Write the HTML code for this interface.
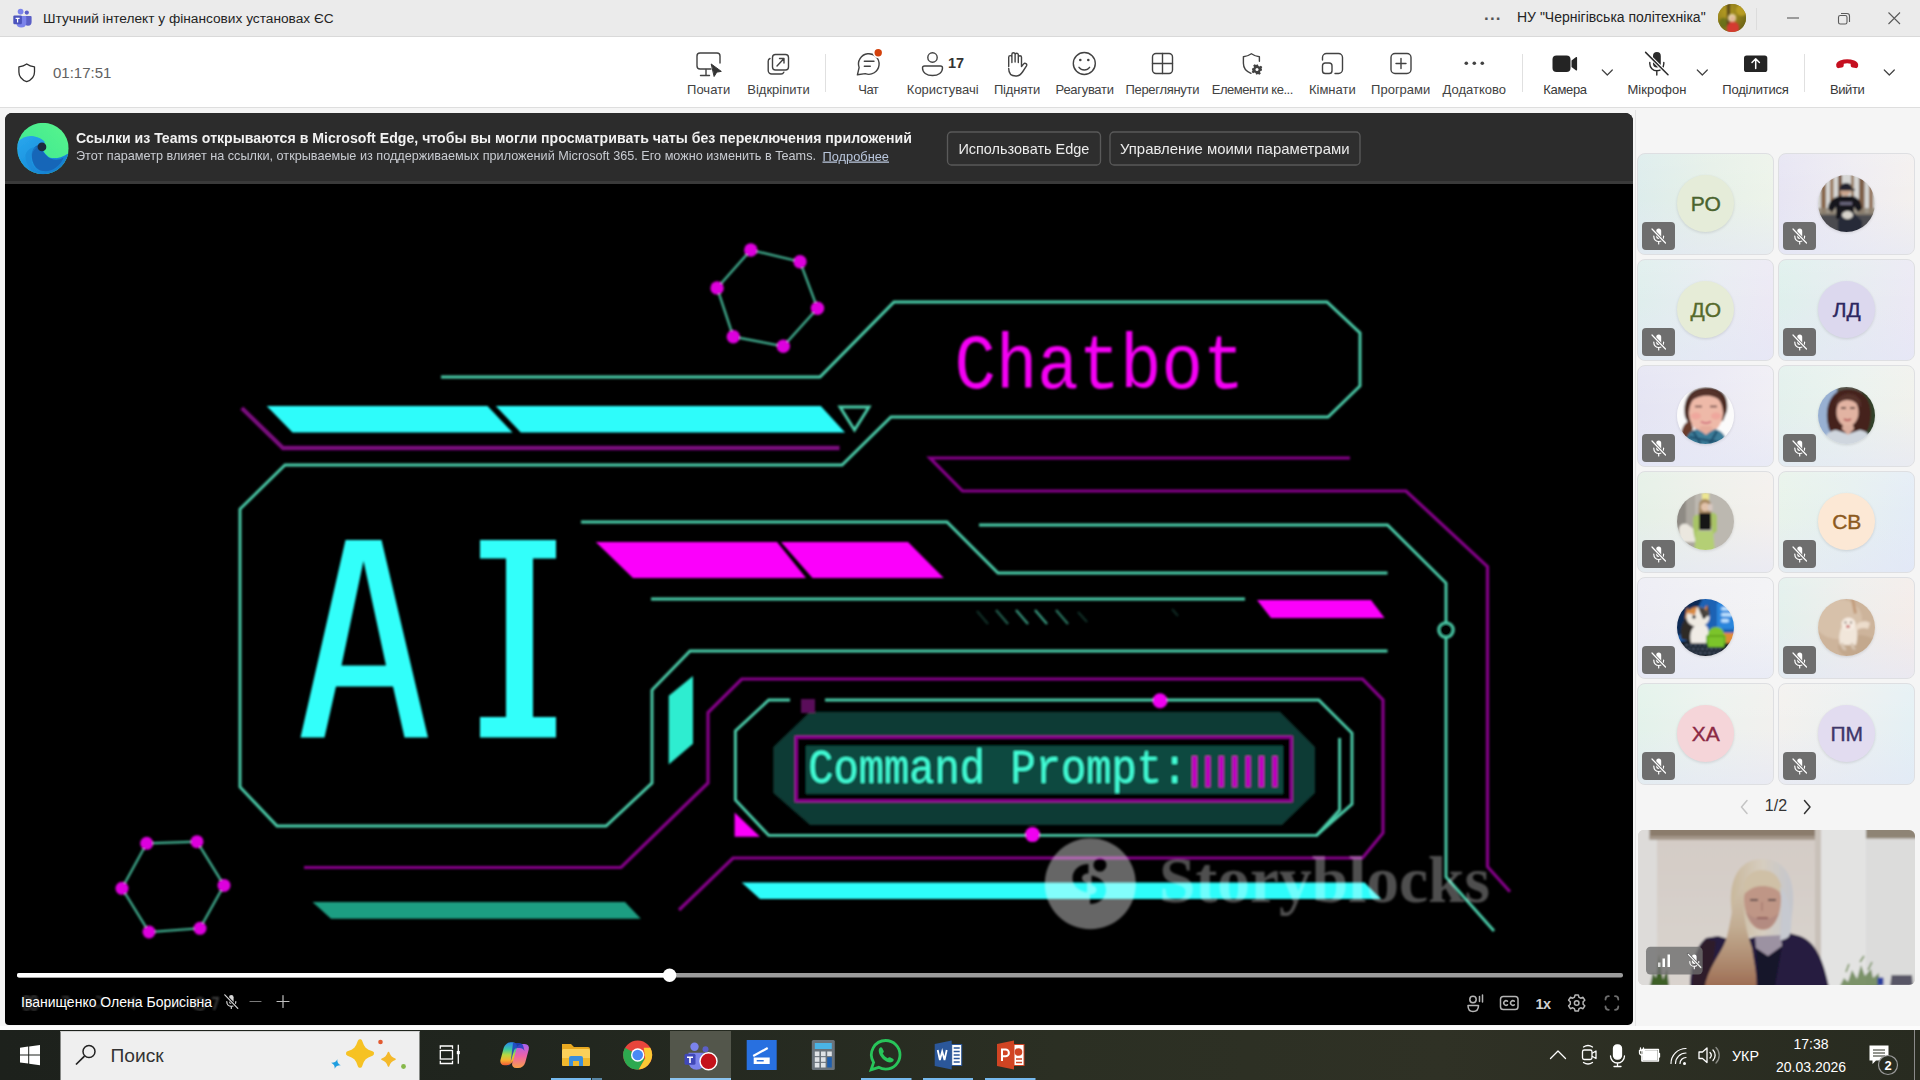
<!DOCTYPE html>
<html lang="uk">
<head>
<meta charset="utf-8">
<title>Teams</title>
<style>
*{box-sizing:border-box;margin:0;padding:0}
html,body{width:1920px;height:1080px;overflow:hidden;background:#f5f5f5;font-family:"Liberation Sans",sans-serif;}
.abs{position:absolute}
#titlebar{position:absolute;left:0;top:0;width:1920px;height:37px;background:#ebebeb;border-bottom:1px solid #d9d9d9}
#toolbar{position:absolute;left:0;top:37px;width:1920px;height:71px;background:#fff;border-bottom:1px solid #dedede}
#main{position:absolute;left:0;top:108px;width:1920px;height:922px;background:#f5f5f5}
#stage{position:absolute;left:5px;top:113px;width:1628px;height:912px;background:#000;border-radius:7px 8px 5px 4px;overflow:hidden}
#taskbar{position:absolute;left:0;top:1030px;width:1920px;height:50px;background:#20251f}
.t{position:absolute;white-space:nowrap;line-height:1}
.lbl{position:absolute;white-space:nowrap;line-height:1;font-size:13px;color:#424242;top:83px;transform:translateX(-50%)}
.sep{position:absolute;width:1px;background:#e0e0e0;top:54px;height:38px}
.tile::before{content:"";position:absolute;inset:0;background:linear-gradient(180deg,rgba(255,255,255,.12) 0%,rgba(255,255,255,0) 45%,rgba(226,230,246,.55) 100%)}
.tile{position:absolute;width:137px;height:102px;border-radius:8px;border:1px solid #dedfe2;overflow:hidden}
.av{position:absolute;left:39.500px;top:21.400px;width:57px;height:57px;border-radius:50%;overflow:hidden;text-align:center;font-size:21px;line-height:58px;-webkit-text-stroke:.4px currentColor;box-shadow:0 1px 3px rgba(0,0,0,.12)}
.mb{position:absolute;left:4px;top:68.500px;width:33px;height:28px;border-radius:4px;background:#6e6e6e}
svg{position:absolute;overflow:visible}
</style>
</head>
<body>
<!-- TITLE BAR -->
<div id="titlebar">
<svg style="left:13px;top:8px" width="19" height="20" viewBox="0 0 19 20">
 <circle cx="13.8" cy="4.6" r="2.1" fill="#5b5fc7"/>
 <circle cx="7.6" cy="3.6" r="2.9" fill="#7b83eb"/>
 <path d="M11.5 8h6.2a.9.9 0 0 1 .9.9v5.2a3.6 3.6 0 0 1-3.6 3.6 3.6 3.6 0 0 1-3.5-3z" fill="#5b5fc7"/>
 <path d="M3.2 8h9.2a.9.9 0 0 1 .9.9v6a5 5 0 0 1-5 4.6 5 5 0 0 1-5-4.6v-6a.9.9 0 0 1 .9-.9z" fill="#7b83eb"/>
 <rect x="0.3" y="7.6" width="8.6" height="8.6" rx="1.2" fill="#4b53bc"/>
 <path d="M2.6 9.8h4v1.1H5.2v3.6H4V10.9H2.6z" fill="#fff"/>
</svg>
<div class="t" style="left:43px;top:12px;font-size:13.7px;color:#242424">Штучний інтелект у фінансових установах ЄС</div>
<div class="t" style="left:1484px;top:6px;font-size:17px;letter-spacing:1.2px;color:#555;font-weight:bold">...</div>
<div class="t" style="left:1517px;top:10px;font-size:14px;color:#242424">НУ "Чернігівська політехніка"</div>
<div class="abs" style="left:1718px;top:4px;width:28px;height:28px;border-radius:50%;overflow:hidden;background:#8f7c1c"><div class="abs" style="inset:-2px;filter:blur(.8px);background:radial-gradient(circle at 30% 30%,#b39a22 0,#93801c 40%,#6b6416 75%,#4f5214 100%)">
  <div class="abs" style="left:20px;top:2px;width:12px;height:12px;border-radius:50%;background:#c4a626;opacity:.8"></div>
  <div class="abs" style="left:3px;top:16px;width:9px;height:10px;border-radius:50%;background:#5a6a1a;opacity:.7"></div>
  <div class="abs" style="left:10.500px;top:0;width:3.500px;height:32px;background:#4e3c18;opacity:.85"></div>
  <div class="abs" style="left:12px;top:11.500px;width:8px;height:8.500px;border-radius:50%;background:#e6d2a4"></div>
  <div class="abs" style="left:13.500px;top:14px;width:5.500px;height:5.500px;border-radius:50%;background:#e2b898"></div>
  <div class="abs" style="left:10.500px;top:19.500px;width:12px;height:14px;border-radius:5px 5px 0 0;background:#d43a30"></div>
</div></div>
<div class="abs" style="left:1756px;top:8px;width:1px;height:22px;background:#dcdcdc"></div>
<svg style="left:1784px;top:10px" width="130" height="18" viewBox="1784 10 130 18" fill="none" stroke="#5a5a5a" stroke-width="1.1">
 <path d="M1787 18h12"/>
 <rect x="1838.5" y="15.5" width="8.5" height="8.5" rx="1.8"/>
 <path d="M1841 13.5h6a2.5 2.5 0 0 1 2.5 2.5v6"/>
 <path d="M1888.5 12.5l11.5 11.5M1900 12.5l-11.5 11.5"/>
</svg>
</div>
<!-- TOOLBAR -->
<div id="toolbar"></div>
<svg style="left:0;top:0" width="1920" height="108" viewBox="0 0 1920 108" fill="none" stroke="#424242" stroke-width="1.4" stroke-linecap="round" stroke-linejoin="round">
 <!-- shield -->
 <path d="M26.700 64c-2 1.500-4.700 2.500-7.800 2.800v5.200c0 4.600 2.900 7.900 7.800 9.700 4.900-1.800 7.800-5.100 7.800-9.700v-5.200c-3.100-.3-5.800-1.300-7.800-2.800z" stroke="#2e2e2e" stroke-width="1.300"/>
 <!-- Pochaty: monitor + cursor -->
 <path d="M711 69h-11a3 3 0 0 1-3-3V56a3 3 0 0 1 3-3h17a3 3 0 0 1 3 3v7"/>
 <path d="M706 69.500v5.500M700.500 75.500h9"/>
 <path d="M711.500 64.200l9.800 7.200-4.500.7-2.500 4.100z" fill="#333" stroke="#333" stroke-width="1"/>
 <!-- Vidkripyty -->
 <rect x="772.500" y="54.500" width="16" height="15.500" rx="3"/>
 <path d="M770 58.500a3 3 0 0 0-1.800 2.800v9.200a3.500 3.500 0 0 0 3.500 3.500h9.300a3 3 0 0 0 2.800-1.800"/>
 <path d="M777 66l7-7.500M779.500 58.500h4.500v4.500"/>
 <!-- Chat -->
 <path d="M859.120 67.520A10.300 10.300 0 1 1 865.280 73.680L857.400 74.800Z"/>
 <path d="M864.300 61.300h9.700M864.300 66.300h6"/>
 <circle cx="878.200" cy="52.800" r="5.400" fill="#fff" stroke="none"/>
 <circle cx="878.200" cy="52.800" r="3.700" fill="#d3410c" stroke="none"/>
 <!-- Users -->
 <circle cx="932.500" cy="57.500" r="4.700"/>
 <path d="M924.500 66h16a2 2 0 0 1 2 2c0 4.500-4 7.500-10 7.500s-10-3-10-7.500a2 2 0 0 1 2-2z"/>
<!-- Hand -->
 <path transform="translate(-1.3,0)" d="M1010 66.500v-9.300a1.600 1.600 0 0 1 3.200 0v5.300M1013.200 62.500v-8.200a1.600 1.600 0 0 1 3.200 0v7.700M1016.400 62v-7.200a1.600 1.600 0 0 1 3.200 0v7.700M1019.600 62.500v-5.200a1.600 1.600 0 0 1 3.200 0v9.200l2.200-2.600a1.700 1.700 0 0 1 2.800 1.900l-4 6.200c-1.500 2.400-3.500 4-6.800 4-4.500 0-7-2.800-7-7.500"/>
 <!-- Smile -->
 <circle cx="1084.300" cy="63.500" r="11"/>
 <circle cx="1080.300" cy="60" r="1.300" fill="#424242" stroke="none"/>
 <circle cx="1088.300" cy="60" r="1.300" fill="#424242" stroke="none"/>
 <path d="M1079 67.300c1.300 1.800 3.100 2.700 5.300 2.700s4-.9 5.300-2.700"/>
 <!-- View grid -->
 <rect x="1152.500" y="53.500" width="20" height="20" rx="3.500"/>
 <path d="M1162.500 53.500v20M1152.500 63.500h20"/>
 <!-- Shield gear -->
 <path d="M1251 73.300c-4.600-1.700-7.600-4.900-7.600-10v-6.600c3.200-.3 5.700-1.300 8-2.900 2.300 1.600 4.800 2.600 8 2.900v4.500"/>
 <g transform="translate(1257,69.500)" fill="#424242" stroke="none"><path d="M-1-5h2l.4 1.500 1.100.5 1.400-.8 1.400 1.400-.8 1.400.5 1.100L5-1v2l-1.500.4-.5 1.100.8 1.400-1.400 1.400-1.400-.8-1.100.5L1 5h-2l-.4-1.500-1.100-.5-1.400.8-1.400-1.400.8-1.400-.5-1.100L-5 1v-2l1.500-.4.500-1.100-.8-1.400 1.400-1.400 1.400.8 1.100-.5z"/><circle r="1.500" fill="#fff"/></g>
 <!-- Rooms -->
 <path d="M1322.500 60v-2.500a4 4 0 0 1 4-4h12a4 4 0 0 1 4 4v12a4 4 0 0 1-4 4h-3.500"/>
 <rect x="1322.500" y="63" width="9.500" height="10.500" rx="2.800"/>
 <!-- Apps -->
 <rect x="1391" y="53.500" width="20" height="20" rx="4"/>
 <path d="M1401 58.500v10M1396 63.500h10"/>
 <!-- More -->
 <g fill="#424242" stroke="none"><circle cx="1466.300" cy="63.300" r="1.800"/><circle cx="1474.300" cy="63.300" r="1.800"/><circle cx="1482.300" cy="63.300" r="1.800"/></g>
 <!-- Camera -->
 <g fill="#242424" stroke="none"><rect x="1552.500" y="55.500" width="18" height="16.500" rx="4"/><path d="M1571.500 60.500l4.300-3.300a.8.800 0 0 1 1.300.6v11.900a.8.800 0 0 1-1.300.6l-4.300-3.300z"/></g>
 <!-- Mic off -->
 <rect x="1653" y="52" width="7.800" height="15.500" rx="3.900" fill="#2b2b2b" stroke="none"/>
 <path d="M1649.800 62.500v1.300a7 7 0 0 0 14 0v-1.300M1656.800 71v4" stroke="#2b2b2b"/>
 <path d="M1645.300 52l23 23" stroke="#fff" stroke-width="3.600"/>
 <path d="M1645.600 52.400l22.400 22.400" stroke="#2b2b2b" stroke-width="1.500"/>
 <!-- Share -->
 <rect x="1744" y="55.500" width="23.300" height="16.500" rx="2.600" fill="#242424" stroke="none"/>
 <path d="M1755.700 68.500v-9.500M1752 62.500l3.700-3.700 3.700 3.700" stroke="#fff" stroke-width="1.500"/>
 <!-- Leave -->
 <path d="M1836.300 66.300c-.6-2.800 1-4.600 3.800-5.700 4.600-1.800 9.600-1.800 14.200 0 2.800 1.100 4.400 2.900 3.800 5.700-.3 1.300-1.200 2-2.500 1.800l-3-.5c-1.100-.2-1.800-1-1.900-2.100l-.1-1.700c-2.200-.7-4.600-.7-6.800 0l-.1 1.700c-.1 1.100-.8 1.900-1.900 2.100l-3 .5c-1.300.2-2.200-.5-2.500-1.800z" fill="#c50f1f" stroke="none"/>
 <!-- chevrons -->
 <path d="M1602.300 70l5 5 5-5M1697.300 70l5 5 5-5M1884.300 70l5 5 5-5" stroke-width="1.200"/>
</svg>
<div class="t" style="left:53px;top:65px;font-size:15px;color:#616161">01:17:51</div>
<div class="t" style="left:948px;top:56px;font-size:14.500px;font-weight:bold;color:#333">17</div>
<div class="lbl" style="left:708.700px">Почати</div>
<div class="lbl" style="left:778.500px">Відкріпити</div>
<div class="lbl" style="left:868.300px;letter-spacing:-.5px">Чат</div>
<div class="lbl" style="left:942.700px">Користувачі</div>
<div class="lbl" style="left:1017px;letter-spacing:-.15px">Підняти</div>
<div class="lbl" style="left:1084.600px;letter-spacing:-.3px">Реагувати</div>
<div class="lbl" style="left:1162.300px;letter-spacing:-.3px">Переглянути</div>
<div class="lbl" style="left:1252.300px;letter-spacing:-.45px">Елементи ке...</div>
<div class="lbl" style="left:1332.300px">Кімнати</div>
<div class="lbl" style="left:1400.700px">Програми</div>
<div class="lbl" style="left:1474.300px">Додатково</div>
<div class="lbl" style="left:1565px;color:#383838;letter-spacing:-.35px">Камера</div>
<div class="lbl" style="left:1657px;color:#383838">Мікрофон</div>
<div class="lbl" style="left:1755.500px;color:#383838;letter-spacing:-.2px">Поділитися</div>
<div class="lbl" style="left:1847.200px;color:#383838;letter-spacing:-.4px">Вийти</div>
<div class="sep" style="left:825px"></div>
<div class="sep" style="left:1522px"></div>
<div class="sep" style="left:1804px"></div>
<!-- MAIN -->
<div id="main"></div>
<div class="abs" style="left:1635px;top:110px;width:1px;height:920px;background:#e3e3e3"></div>
<!-- STAGE -->
<div id="stage">
<svg style="left:0;top:0" width="1628" height="912" viewBox="5 113 1628 912">
<defs>
 <filter id="b0" x="-2%" y="-20%" width="104%" height="140%"><feGaussianBlur stdDeviation="0.45"/></filter>
 <filter id="b1" x="-5%" y="-5%" width="110%" height="110%"><feGaussianBlur stdDeviation="0.85"/></filter>
 <filter id="b2" x="-5%" y="-5%" width="110%" height="110%"><feGaussianBlur stdDeviation="1.1"/></filter>
</defs>
<!-- notification bar -->
<rect x="5" y="113" width="1628" height="71" fill="#2c2c2c"/>
<rect x="5" y="181" width="1628" height="3" fill="#3a3a3a"/>
<g id="gfx" filter="url(#b1)">
<!-- teal outlines -->
<g fill="none" stroke="#4ccfab" stroke-width="2.900" stroke-linejoin="miter">
 <path d="M1387.500 651H690L652 690V783L606 826H277L240 787V509L285 465H842L891 417H1328L1360 386V333L1327 302H894L820 377H441"/>
 <path d="M581 522H947L998 573H1387.500"/>
 <path d="M979 525H1387.500L1446 583V877L1494 931"/>
 <path d="M651 599H1245"/>
 <path d="M825 700H1318.750L1352 733V804L1316.700 835.400H768.750L735.400 800V731L768.750 700H790"/>
 <path d="M1339.600 738V810L1316 836"/>
 <path d="M840 407H869L854.500 430Z"/>
</g>
<circle cx="1446" cy="630" r="7.500" fill="#000" stroke="#4ccfab" stroke-width="2.600"/>
<!-- purple lines -->
<g fill="none" stroke="#86068a" stroke-width="3.200">
 <path d="M241.700 408L283 448H839.600" stroke-width="4.300" stroke="#7a087e"/>
 <path d="M1350 458H930L962.500 491H1406L1487.500 566.700V866.700L1510 891.700"/>
 <path d="M304 867.500H621L708 783V712.500L741.700 679H1362.500L1383 700V833L1362.500 858H733L679 910"/>
</g>
<!-- cyan bars -->
<g fill="#2ffcfa">
 <path d="M266.700 406H487.500L512.500 432.500H292.500Z"/>
 <path d="M495.800 406H820.800L845 432.500H520.800Z"/>
 <path d="M741.700 882.500H1364.600L1381 899H760Z"/>
</g>
<path d="M312.500 902H625L640.800 918.750H331Z" fill="#1e9e82"/>
<path d="M668.750 695.800L693 676V743.750L668.750 764.600Z" fill="#2fedd0"/>
<!-- magenta bars -->
<g fill="#fb00fb">
 <path d="M595.800 542H777L806 578H633Z"/>
 <path d="M781 542H908L943.750 578H812.500Z"/>
 <path d="M1257 600H1371L1384.600 618H1271Z"/>
 <path d="M734.600 812.500V836.700H760Z"/>
</g>
<!-- hash marks -->
<g stroke="#3a9c82" stroke-width="2.300" fill="none">
 <path d="M977 611l11 13" opacity=".3"/><path d="M996 610l12 14" opacity=".6"/><path d="M1016 610l12 14" opacity=".95"/><path d="M1035 610l12 14"/><path d="M1056 610l12 14" opacity=".75"/><path d="M1078 612l9 10" opacity=".3"/><path d="M1172 609l6 7" opacity=".25"/>
</g>
<!-- AI -->
<g fill="#30fffa">
 <path fill-rule="evenodd" d="M300.500 737.500L345.500 540H381.500L428 737.500H404.500L393 686.500H336L324.500 737.500ZM363.500 561L341.500 665.500H386Z"/>
 <path d="M480 540H556V558.500H533V717H556V737.500H480V717H506V558.500H480Z"/>
</g>
<!-- hexagons -->
<g fill="none" stroke="#45b898" stroke-width="2.200">
 <path d="M750.800 250L800 261.700L817.500 308.300L783.300 346.300L733.300 336.700L717.100 287.900Z"/>
 <path d="M146.700 843.300L197 841.700L224 885.400L200 928.300L149 932L122 888.300Z"/>
</g>
<g fill="#de00de">
 <circle cx="750.800" cy="250" r="6.700"/><circle cx="800" cy="261.700" r="6.700"/><circle cx="817.500" cy="308.300" r="6.700"/><circle cx="783.300" cy="346.300" r="6.700"/><circle cx="733.300" cy="336.700" r="6.700"/><circle cx="717.100" cy="287.900" r="6.700"/>
 <circle cx="146.700" cy="843.300" r="6.500"/><circle cx="197" cy="841.700" r="6.500"/><circle cx="224" cy="885.400" r="6.500"/><circle cx="200" cy="928.300" r="6.500"/><circle cx="149" cy="932" r="6.500"/><circle cx="122" cy="888.300" r="6.500"/>
 <circle cx="1160" cy="700.800" r="7.500" fill="#f000f0"/><circle cx="1032.500" cy="834.600" r="7.500" fill="#f000f0"/>
</g>
<!-- command prompt -->
<path d="M773.300 747L810 711.700H1280L1315 747V793L1282 825H810L773.300 793Z" fill="#0e3b34"/>
<rect x="796" y="737" width="495.500" height="64" fill="#000" stroke="#9c069e" stroke-width="2.600"/>
<rect x="806" y="745.800" width="477" height="48" fill="#0f4a40"/>
<rect x="801" y="699" width="14" height="14" fill="#5a0a5a"/>
<g fill="#c000c0">
 <rect x="1192" y="756" width="5" height="31"/><rect x="1205.400" y="756" width="5" height="31"/><rect x="1218.800" y="756" width="5" height="31"/><rect x="1232.200" y="756" width="5" height="31"/><rect x="1245.600" y="756" width="5" height="31"/><rect x="1259" y="756" width="5" height="31"/><rect x="1272.400" y="756" width="5" height="31"/>
</g>
<g font-family="Liberation Mono, monospace">
 <text transform="translate(954.500,388) scale(1,1.130)" font-size="69" fill="#f400f4">Chatbot</text>
 <text transform="translate(808.300,782.500) scale(1,1.150)" font-size="42.100" fill="#42ffd8">Command Prompt:</text>
</g>
</g>
<!-- watermark -->
<g filter="url(#b1)">
 <path fill-rule="evenodd" fill="#fff" opacity=".40" d="M1044.800 883.800a45.500 45.500 0 1 0 91 0a45.500 45.500 0 1 0-91 0zM1100 858.500a6.500 6.500 0 1 1-.1 0zM1088.500 864c-9 0-16 6-16 14 0 9 7 12.500 14.500 14.500v-9.500c-3.500-1-5-2.500-5-5s2.500-4.500 6.500-4.500zM1091.500 875.500v9.500c3.500 1 5 2.500 5 5s-2.500 4.500-6.500 4.500v9.500c9 0 16-6 16-14 0-9-7-12.500-14.500-14.500z"/>
 <text x="1159" y="902" font-family="Liberation Serif, serif" font-weight="bold" font-size="65" textLength="331" lengthAdjust="spacingAndGlyphs" fill="#fff" opacity=".31">Storyblocks</text>
</g>
<!-- progress -->
<rect x="17" y="973" width="1606" height="4.500" rx="2" fill="#9b9b9b"/>
<rect x="17" y="973" width="653" height="4.500" rx="2" fill="#fff"/>
<circle cx="669.600" cy="975.200" r="6.700" fill="#fff"/>
<!-- ghost controls -->
<g fill="none" stroke="#3a3a3a" stroke-width="1.800" filter="url(#b1)"><rect x="24" y="996" width="5" height="14" rx="2.500"/><rect x="31.500" y="996" width="5" height="14" rx="2.500"/><path d="M62 997h6v8M96 997a5 5 0 1 1-3 3M128 1003l6-5v10zM165 1007h10M180 1000v8M190 1003l6 6" opacity=".9"/><path d="M200 998a5 6 0 0 1 0 12a5 6 0 0 1 0-12zM212 998l6 0-4 12" stroke="#444"/></g>
<!-- mic off / minus / plus -->
<g fill="none" stroke="#d8d8d8" stroke-width="1.200" stroke-linecap="round">
 <rect x="229" y="995" width="4.600" height="9" rx="2.300" fill="#d8d8d8" stroke="none"/>
 <path d="M226.800 1001.500v.3a4.500 4.500 0 0 0 9 0v-.3M231.300 1006.300v2.200"/>
 <path d="M224.500 994.500l13.500 14" stroke="#000" stroke-width="2.800"/>
 <path d="M224.800 994.800l13 13.500"/>
 <path d="M250 1001.500h11" stroke="#7a7a7a"/>
 <path d="M277 1001.500h12M283 995.500v12" stroke="#c0c0c0"/>
</g>
<!-- right controls -->
<g fill="none" stroke="#b4b4b4" stroke-width="1.500" stroke-linecap="round" stroke-linejoin="round">
 <circle cx="1473" cy="999.500" r="3.200"/><path d="M1468 1005.500h10.500c0 4-2.500 6-5.500 6s-5-2-5-6zM1479.500 996.500v5M1482.500 995v7"/>
 <rect x="1500.500" y="996.500" width="17.500" height="13" rx="2.800"/><path d="M1507.500 1001.200a2.300 2.300 0 1 0 0 3.600M1514.300 1001.200a2.300 2.300 0 1 0 0 3.600"/>
 <g transform="translate(1576.700,1003)"><path d="M-1.600-8h3.200l.7 2.300 1.700.9 2.300-.9 1.800 2.900-1.700 1.600v2.400l1.700 1.600-1.800 2.900-2.300-.9-1.700.9-.7 2.300h-3.200l-.7-2.300-1.700-.9-2.300.9-1.800-2.900 1.700-1.600v-2.400l-1.700-1.600 1.800-2.900 2.300.9 1.700-.9z"/><circle r="2.300"/></g>
 <path d="M1605.500 999.500c0-2 1.200-3.300 3.300-3.300M1615 996.200c2 0 3.300 1.200 3.300 3.300M1618.300 1006.500c0 2-1.200 3.300-3.300 3.300M1608.800 1009.800c-2 0-3.300-1.200-3.300-3.300" stroke="#6c6c6c" stroke-width="1.800"/>
</g>
<text x="1535.500" y="1009" font-family="Liberation Sans, sans-serif" font-weight="bold" font-size="14.500" fill="#d0d0d0" letter-spacing="-.5">1x</text>
<text x="21" y="1007" font-family="Liberation Sans, sans-serif" font-size="14" fill="#fff">Іванищенко Олена Борисівна</text>
<!-- notification content -->
<g filter="url(#b0)">
 <defs>
  <linearGradient id="eg1" x1="0" y1="0" x2="1" y2="1"><stop offset="0" stop-color="#2aa8ee"/><stop offset=".5" stop-color="#1b94e0"/><stop offset="1" stop-color="#1670c4"/></linearGradient>
  <linearGradient id="eg2" x1="0" y1="1" x2="1" y2="0"><stop offset="0" stop-color="#35d6a0"/><stop offset=".5" stop-color="#48ec90"/><stop offset="1" stop-color="#58f58c"/></linearGradient>
 </defs>
 <g transform="translate(17.300,122.800) scale(.514)">
  <clipPath id="ec"><circle cx="50" cy="50" r="50"/></clipPath>
  <g clip-path="url(#ec)">
   <rect x="0" y="0" width="100" height="100" fill="url(#eg2)"/>
   <path d="M-2 40C8 28 20 24 32 26c10 2 18 6 22 12l-8 6c4 10 8 18 18 24 10 2 22 0 34-8l6 10-10 30H-2z" fill="url(#eg1)"/>
   <path d="M28 62c0-10 6-18 16-20 4 12 10 22 22 28 8 3 16 2 24-2-6 16-22 28-40 26C36 92 28 78 28 62z" fill="#1466b8"/>
   <path d="M16 66c0 16 12 30 30 34-14-8-20-20-18-34 1-8 4-14 10-18-10-2-22 6-22 18z" fill="#1b86d6" opacity=".55"/>
   <circle cx="48" cy="47" r="8.500" fill="#1c2a3c"/>
  </g>
 </g>
 <text x="76" y="142.500" font-family="Liberation Sans, sans-serif" font-weight="bold" font-size="14.100" fill="#f2f2f2" textLength="836" lengthAdjust="spacingAndGlyphs">Ссылки из Teams открываются в Microsoft Edge, чтобы вы могли просматривать чаты без переключения приложений</text>
 <text x="76" y="159.500" font-family="Liberation Sans, sans-serif" font-size="12.600" fill="#c9ccd2" textLength="740" lengthAdjust="spacingAndGlyphs">Этот параметр влияет на ссылки, открываемые из поддерживаемых приложений Microsoft 365. Его можно изменить в Teams.</text>
 <text x="822.500" y="160.500" font-family="Liberation Sans, sans-serif" font-size="12.600" fill="#b9c6dc" textLength="66.500" lengthAdjust="spacingAndGlyphs" text-decoration="underline">Подробнее</text>
 <rect x="947.500" y="132" width="153" height="33" rx="4" fill="#2f2f2f" stroke="#5a5a5a" stroke-width="1.300"/>
 <rect x="1110" y="132" width="250" height="33" rx="4" fill="#2f2f2f" stroke="#5a5a5a" stroke-width="1.300"/>
 <text x="958.400" y="153.500" font-family="Liberation Sans, sans-serif" font-size="14.500" fill="#ececec" textLength="131" lengthAdjust="spacingAndGlyphs">Использовать Edge</text>
 <text x="1120" y="153.500" font-family="Liberation Sans, sans-serif" font-size="14.500" fill="#ececec" textLength="229.500" lengthAdjust="spacingAndGlyphs">Управление моими параметрами</text>
</g>
</svg>
</div>
<!-- RIGHT PANEL -->
<div id="right"><svg width="0" height="0" style="left:0;top:0"><defs><filter id="pb" x="-10%" y="-10%" width="120%" height="120%"><feGaussianBlur stdDeviation="0.800"/></filter></defs></svg>
<div class="tile" style="left:1636.8px;top:152.7px;background:linear-gradient(100deg,#dcecec 0%,#e6f0e8 50%,#eef4ea 100%)">
<div class="av" style="background:#e5ecd9;color:#4b6430">РО</div>
<div class="mb"><svg style="left:0;top:0" width="33" height="28" viewBox="0 0 33 28" fill="none" stroke="#fff" stroke-width="1.200" stroke-linecap="round"><rect x="14.200" y="6.500" width="5" height="10.500" rx="2.500" fill="#fff" stroke="none"/><path d="M11.800 14v.6a4.900 4.900 0 0 0 9.800 0v-.6M16.700 19.600v2.400"/><path d="M9.700 6.700l14 14.600" stroke="#6e6e6e" stroke-width="3"/><path d="M10 7l13.500 14"/></svg></div></div>
<div class="tile" style="left:1777.8px;top:152.7px;background:linear-gradient(100deg,#e6e4f3 0%,#eeecf2 50%,#f5f1ee 100%)">
<div class="av"><svg style="left:0;top:0" width="57" height="57" viewBox="0 0 57 57"><g filter="url(#pb)"><rect x="-3" y="-3" width="63" height="63" fill="#d6d6d4"/>
<g fill="#8a6a50"><rect x="3" y="-3" width="5" height="50"/><rect x="12" y="-3" width="3.500" height="46" fill="#9a7a5e"/><rect x="20" y="-3" width="4" height="30" fill="#7a5c46"/><rect x="33" y="-3" width="3" height="30" fill="#9a8068"/><rect x="41" y="-3" width="5.500" height="48" fill="#7e604a"/><rect x="51" y="-3" width="4" height="46" fill="#94755a"/></g>
<rect x="-3" y="38" width="63" height="22" fill="#4c4c50"/><rect x="-3" y="33" width="63" height="7" fill="#8e8474" opacity=".8"/>
<path d="M10 34c0-8 6-12 12-13h12c6 1 10 6 10 13l-4 3-4-5v12H18V32l-4 5z" fill="#16161e"/>
<circle cx="27.500" cy="15.500" r="5.300" fill="#caa48c"/><path d="M21.500 14.500c0-4 3-6.500 6.500-6.500s6 2 6 5.500l3 .5v1.500h-15.500z" fill="#20242e"/>
<path d="M20 46l4-8h12l8 8v14H20z" fill="#262a38"/><ellipse cx="29.500" cy="40" rx="5.500" ry="4" fill="#d8d4cc"/>
<rect x="22" y="27" width="12" height="3" fill="#8a84a0" opacity=".7"/></g></svg></div>
<div class="mb"><svg style="left:0;top:0" width="33" height="28" viewBox="0 0 33 28" fill="none" stroke="#fff" stroke-width="1.200" stroke-linecap="round"><rect x="14.200" y="6.500" width="5" height="10.500" rx="2.500" fill="#fff" stroke="none"/><path d="M11.800 14v.6a4.900 4.900 0 0 0 9.800 0v-.6M16.700 19.600v2.400"/><path d="M9.700 6.700l14 14.600" stroke="#6e6e6e" stroke-width="3"/><path d="M10 7l13.500 14"/></svg></div></div>
<div class="tile" style="left:1636.8px;top:258.7px;background:linear-gradient(100deg,#deeeec 0%,#e8ecf2 55%,#ede8f5 100%)">
<div class="av" style="background:#e6ecd7;color:#566a2c">ДО</div>
<div class="mb"><svg style="left:0;top:0" width="33" height="28" viewBox="0 0 33 28" fill="none" stroke="#fff" stroke-width="1.200" stroke-linecap="round"><rect x="14.200" y="6.500" width="5" height="10.500" rx="2.500" fill="#fff" stroke="none"/><path d="M11.800 14v.6a4.900 4.900 0 0 0 9.800 0v-.6M16.700 19.600v2.400"/><path d="M9.700 6.700l14 14.600" stroke="#6e6e6e" stroke-width="3"/><path d="M10 7l13.500 14"/></svg></div></div>
<div class="tile" style="left:1777.8px;top:258.7px;background:linear-gradient(100deg,#def0ec 0%,#e6ecf0 50%,#ece8f5 100%)">
<div class="av" style="background:#dcd8ee;color:#2c2760">ЛД</div>
<div class="mb"><svg style="left:0;top:0" width="33" height="28" viewBox="0 0 33 28" fill="none" stroke="#fff" stroke-width="1.200" stroke-linecap="round"><rect x="14.200" y="6.500" width="5" height="10.500" rx="2.500" fill="#fff" stroke="none"/><path d="M11.800 14v.6a4.900 4.900 0 0 0 9.800 0v-.6M16.700 19.600v2.400"/><path d="M9.700 6.700l14 14.600" stroke="#6e6e6e" stroke-width="3"/><path d="M10 7l13.500 14"/></svg></div></div>
<div class="tile" style="left:1636.8px;top:364.7px;background:linear-gradient(100deg,#e4e4f3 0%,#eae9f4 50%,#f1eff5 100%)">
<div class="av"><svg style="left:0;top:0" width="57" height="57" viewBox="0 0 57 57"><g filter="url(#pb)"><rect x="-3" y="-3" width="63" height="63" fill="#fbfbfb"/>
<path d="M8 30c-3-16 4-30 22-30 14 0 22 8 20 24l-4 10-34 4z" fill="#4c2a22"/>
<path d="M4 50c0-8 3-14 8-16l4 6-2 14z" fill="#6a3a2a"/>
<ellipse cx="29" cy="26" rx="17" ry="20.500" fill="#eeb9a8"/>
<path d="M12 16c2-10 10-15 20-14 8 1 13 6 14 14-6-6-12-8-20-7-6 1-10 3-14 7z" fill="#55302a"/>
<ellipse cx="19" cy="29" rx="5" ry="3.500" fill="#f0a098" opacity=".7"/><ellipse cx="39" cy="29" rx="5" ry="3.500" fill="#f0a098" opacity=".7"/>
<path d="M18 19.500h7M33 19.500h7" stroke="#5a3a34" stroke-width="1.600"/><path d="M24 34.500c3 2 7 2 10 0" stroke="#d06a7a" stroke-width="1.800" fill="none"/>
<path d="M8 60c0-10 4-16 12-18l9 5 9-5c8 2 12 8 12 18z" fill="#3a7c98"/><path d="M12 50l34 6M16 44l8 14M40 44l-8 14" stroke="#1e4a68" stroke-width="2"/><path d="M22 42l7 6 7-6-2-3h-10z" fill="#e6ac9c"/></g></svg></div>
<div class="mb"><svg style="left:0;top:0" width="33" height="28" viewBox="0 0 33 28" fill="none" stroke="#fff" stroke-width="1.200" stroke-linecap="round"><rect x="14.200" y="6.500" width="5" height="10.500" rx="2.500" fill="#fff" stroke="none"/><path d="M11.800 14v.6a4.900 4.900 0 0 0 9.800 0v-.6M16.700 19.600v2.400"/><path d="M9.700 6.700l14 14.600" stroke="#6e6e6e" stroke-width="3"/><path d="M10 7l13.500 14"/></svg></div></div>
<div class="tile" style="left:1777.8px;top:364.7px;background:linear-gradient(100deg,#e2f0ec 0%,#eaf2ee 50%,#f2f1ec 100%)">
<div class="av"><svg style="left:0;top:0" width="57" height="57" viewBox="0 0 57 57"><g filter="url(#pb)"><rect x="-3" y="-3" width="63" height="63" fill="#5a5a50"/><rect x="-3" y="-3" width="22" height="63" fill="#98b0d2"/><rect x="44" y="-3" width="16" height="63" fill="#33432c"/>
<path d="M10 38c-4-20 4-36 20-36 16 0 26 12 22 34-1 8-6 12-10 12H18c-4 0-7-4-8-10z" fill="#45241f"/>
<ellipse cx="29.500" cy="25" rx="11" ry="14.500" fill="#e2b3a2"/>
<path d="M17 20c2-10 8-14 16-13 7 1 11 6 10 14-4-5-8-8-14-8-5 0-8 3-12 7z" fill="#55302a"/>
<path d="M23 21h5M32 21h5" stroke="#3a2420" stroke-width="1.400"/><path d="M26 32c2 1.500 5 1.500 7 0" stroke="#b85a5a" stroke-width="1.700" fill="none"/>
<path d="M4 60c0-10 6-16 14-17l12 4 12-4c8 1 12 8 12 17z" fill="#cfd6de"/><path d="M24 42l6 6 6-6-1-4h-10z" fill="#dcae9e"/></g></svg></div>
<div class="mb"><svg style="left:0;top:0" width="33" height="28" viewBox="0 0 33 28" fill="none" stroke="#fff" stroke-width="1.200" stroke-linecap="round"><rect x="14.200" y="6.500" width="5" height="10.500" rx="2.500" fill="#fff" stroke="none"/><path d="M11.800 14v.6a4.900 4.900 0 0 0 9.800 0v-.6M16.700 19.600v2.400"/><path d="M9.700 6.700l14 14.600" stroke="#6e6e6e" stroke-width="3"/><path d="M10 7l13.500 14"/></svg></div></div>
<div class="tile" style="left:1636.8px;top:470.7px;background:linear-gradient(100deg,#e4f0e6 0%,#eef0ea 50%,#f5f0ee 100%)">
<div class="av"><svg style="left:0;top:0" width="57" height="57" viewBox="0 0 57 57"><g filter="url(#pb)"><rect x="-3" y="-3" width="63" height="63" fill="#aaa69e"/><rect x="18" y="-3" width="42" height="63" fill="#bcb8b0"/><rect x="-3" y="-3" width="12" height="63" fill="#8e8a84"/>
<rect x="25" y="0" width="7" height="7" fill="#ece690"/>
<path d="M2 36c0-4 4-6 8-5l8 6v12H4c-2-4-2-9-2-13z" fill="#ebe7df"/>
<path d="M22 12c0-4 3-6 6-6s6 2 6 7l1 20h-14z" fill="#a88a62"/>
<circle cx="28" cy="14" r="4.200" fill="#e2c2aa"/><rect x="31" y="11" width="4.500" height="7" rx="1" fill="#d8c8c0"/>
<rect x="22" y="20" width="12" height="17" rx="2" fill="#121218"/>
<path d="M16 26c0-3 3-5 6-4v20l-4 4c-2-6-2-14-2-20zM34 20c3-1 6 1 6 4v14l-5 4z" fill="#a8c466"/>
<path d="M19 38h17l2 22H17z" fill="#b4cf74"/></g></svg></div>
<div class="mb"><svg style="left:0;top:0" width="33" height="28" viewBox="0 0 33 28" fill="none" stroke="#fff" stroke-width="1.200" stroke-linecap="round"><rect x="14.200" y="6.500" width="5" height="10.500" rx="2.500" fill="#fff" stroke="none"/><path d="M11.800 14v.6a4.900 4.900 0 0 0 9.800 0v-.6M16.700 19.600v2.400"/><path d="M9.700 6.700l14 14.600" stroke="#6e6e6e" stroke-width="3"/><path d="M10 7l13.500 14"/></svg></div></div>
<div class="tile" style="left:1777.8px;top:470.7px;background:linear-gradient(100deg,#e8f3ea 0%,#e6f0f0 50%,#e3ebf7 100%)">
<div class="av" style="background:#fce8d5;color:#8c5a1e">СВ</div>
<div class="mb"><svg style="left:0;top:0" width="33" height="28" viewBox="0 0 33 28" fill="none" stroke="#fff" stroke-width="1.200" stroke-linecap="round"><rect x="14.200" y="6.500" width="5" height="10.500" rx="2.500" fill="#fff" stroke="none"/><path d="M11.800 14v.6a4.900 4.900 0 0 0 9.800 0v-.6M16.700 19.600v2.400"/><path d="M9.700 6.700l14 14.600" stroke="#6e6e6e" stroke-width="3"/><path d="M10 7l13.500 14"/></svg></div></div>
<div class="tile" style="left:1636.8px;top:576.7px;background:linear-gradient(100deg,#ececf4 0%,#f0f0f4 50%,#f3f3f5 100%)">
<div class="av"><svg style="left:0;top:0" width="57" height="57" viewBox="0 0 57 57"><g filter="url(#pb)"><rect x="-3" y="-3" width="63" height="63" fill="#1b62b4"/><path d="M-3-3h30L10 30-3 40z" fill="#0a2a54"/>
<rect x="40" y="4" width="20" height="26" fill="#2a86dc"/><g fill="#bfe2ff"><rect x="44" y="8" width="10" height="3.500" rx="1.700"/><rect x="44" y="14" width="12" height="3.500" rx="1.700"/><rect x="44" y="20" width="8" height="3.500" rx="1.700"/></g>
<rect x="-3" y="42" width="63" height="18" fill="#121a28"/><path d="M8 46h34M6 50h38M4 54h40" stroke="#5a6a80" stroke-width="1.500" stroke-dasharray="3 1.500"/>
<rect x="46" y="34" width="14" height="10" fill="#e08a34"/>
<path d="M4 40c-2-10 2-22 10-24l6 4-2 24z" fill="#2e2a28"/>
<path d="M14 44c-2-8 0-16 6-18h8c4 2 5 10 3 18z" fill="#f0ece6"/>
<path d="M10 8l4 8-6 4zM30 6l2 9-7-2z" fill="#d8863a"/><path d="M31 6l2 9-4-1z" fill="#3a3432"/>
<ellipse cx="21" cy="18" rx="11.500" ry="10" fill="#efeae2"/><path d="M21 8c6 0 11 4 11.500 9l-7 1c-2-3-3-6-4.500-10z" fill="#4a423e"/><path d="M10 14c2-4 6-6 10-6l-2 8z" fill="#d88a42"/>
<circle cx="17" cy="18" r="1.800" fill="#1a1a1a"/><circle cx="27" cy="18" r="1.800" fill="#1a1a1a"/>
<path d="M31 36c0-5 3.500-8 8-8s8 3 8 8v12H31z" fill="#7cc42a"/><rect x="29" y="36" width="2.500" height="9" rx="1.200" fill="#6ab020"/><rect x="46.500" y="36" width="2.500" height="9" rx="1.200" fill="#6ab020"/><path d="M31 37h16" stroke="#4a8a14" stroke-width="1"/></g></svg></div>
<div class="mb"><svg style="left:0;top:0" width="33" height="28" viewBox="0 0 33 28" fill="none" stroke="#fff" stroke-width="1.200" stroke-linecap="round"><rect x="14.200" y="6.500" width="5" height="10.500" rx="2.500" fill="#fff" stroke="none"/><path d="M11.800 14v.6a4.900 4.900 0 0 0 9.800 0v-.6M16.700 19.600v2.400"/><path d="M9.700 6.700l14 14.600" stroke="#6e6e6e" stroke-width="3"/><path d="M10 7l13.500 14"/></svg></div></div>
<div class="tile" style="left:1777.8px;top:576.7px;background:linear-gradient(100deg,#e2f0ec 0%,#eeeeec 50%,#f5ece9 100%)">
<div class="av"><svg style="left:0;top:0" width="57" height="57" viewBox="0 0 57 57"><g filter="url(#pb)"><rect x="-3" y="-3" width="63" height="63" fill="#cdb49b"/><ellipse cx="20" cy="20" rx="24" ry="20" fill="#d9c4ae" opacity=".8"/><ellipse cx="40" cy="48" rx="20" ry="12" fill="#bfa388" opacity=".7"/>
<path d="M33 0l3 0 3 14-3 1z" fill="#c29c7c"/>
<path d="M22 46c-2-8 0-16 4-22 2-3 8-3 10 0 4 6 4 14 2 22z" fill="#f1e6da"/>
<ellipse cx="30.500" cy="25" rx="7" ry="6.500" fill="#f6ece2"/>
<path d="M38 26c4-4 10-5 14-2l-2 6c-4-2-8-1-11 1z" fill="#ecdccb"/>
<ellipse cx="30" cy="27.500" rx="2" ry="1.600" fill="#c86464"/><circle cx="27.500" cy="23.500" r="1" fill="#5a4a40"/><circle cx="33" cy="23.500" r="1" fill="#5a4a40"/>
<path d="M24 44c0 4 2 6 4 6M34 44c0 4 2 6 3 5" stroke="#d8c6b4" stroke-width="3" fill="none"/></g></svg></div>
<div class="mb"><svg style="left:0;top:0" width="33" height="28" viewBox="0 0 33 28" fill="none" stroke="#fff" stroke-width="1.200" stroke-linecap="round"><rect x="14.200" y="6.500" width="5" height="10.500" rx="2.500" fill="#fff" stroke="none"/><path d="M11.800 14v.6a4.900 4.900 0 0 0 9.800 0v-.6M16.700 19.600v2.400"/><path d="M9.700 6.700l14 14.600" stroke="#6e6e6e" stroke-width="3"/><path d="M10 7l13.500 14"/></svg></div></div>
<div class="tile" style="left:1636.8px;top:682.7px;background:linear-gradient(100deg,#e2f2ea 0%,#ecf2ee 50%,#f2f0ee 100%)">
<div class="av" style="background:#f5d5d9;color:#8c2a45">ХА</div>
<div class="mb"><svg style="left:0;top:0" width="33" height="28" viewBox="0 0 33 28" fill="none" stroke="#fff" stroke-width="1.200" stroke-linecap="round"><rect x="14.200" y="6.500" width="5" height="10.500" rx="2.500" fill="#fff" stroke="none"/><path d="M11.800 14v.6a4.900 4.900 0 0 0 9.800 0v-.6M16.700 19.600v2.400"/><path d="M9.700 6.700l14 14.600" stroke="#6e6e6e" stroke-width="3"/><path d="M10 7l13.500 14"/></svg></div></div>
<div class="tile" style="left:1777.8px;top:682.7px;background:linear-gradient(100deg,#f3f1ee 0%,#ecf0f0 50%,#e3f0f5 100%)">
<div class="av" style="background:#e2dcf0;color:#3f3769">ПМ</div>
<div class="mb"><svg style="left:0;top:0" width="33" height="28" viewBox="0 0 33 28" fill="none" stroke="#fff" stroke-width="1.200" stroke-linecap="round"><rect x="14.200" y="6.500" width="5" height="10.500" rx="2.500" fill="#fff" stroke="none"/><path d="M11.800 14v.6a4.900 4.900 0 0 0 9.800 0v-.6M16.700 19.600v2.400"/><path d="M9.700 6.700l14 14.600" stroke="#6e6e6e" stroke-width="3"/><path d="M10 7l13.500 14"/></svg></div></div>
<svg style="left:1735px;top:797px" width="82" height="20" viewBox="1735 797 82 20" fill="none" stroke-width="1.500" stroke-linecap="round" stroke-linejoin="round"><path d="M1747 800.500l-5.500 6.500 5.500 6.500" stroke="#c4c4c4"/><path d="M1804.500 800.500l5.500 6.500-5.500 6.500" stroke="#333"/></svg>
<div class="t" style="left:1764.800px;top:798.300px;font-size:16px;color:#333">1/2</div>
</div>
<div class="abs" style="left:1638px;top:830px;width:277px;height:155px;border-radius:6px;overflow:hidden;background:#d6cec8">
<svg style="left:0;top:0" width="277" height="155" viewBox="1638 830 277 155">
 <defs><filter id="sb" x="-10%" y="-10%" width="120%" height="120%"><feGaussianBlur stdDeviation="1.300"/></filter>
 <linearGradient id="hairL" x1="0" y1="0" x2="0" y2="1"><stop offset="0" stop-color="#cfc2ac"/><stop offset=".4" stop-color="#c2ac92"/><stop offset=".75" stop-color="#ac876c"/><stop offset="1" stop-color="#9a664e"/></linearGradient>
 <linearGradient id="hairT" x1="0" y1="0" x2="1" y2="0"><stop offset="0" stop-color="#c9b89c"/><stop offset=".5" stop-color="#d6cdbf"/><stop offset="1" stop-color="#c4c6cd"/></linearGradient>
 <linearGradient id="wall" x1="0" y1="0" x2="0" y2="1"><stop offset="0" stop-color="#d3cbc5"/><stop offset="1" stop-color="#dad4cf"/></linearGradient></defs>
 <g filter="url(#sb)">
 <rect x="1630" y="822" width="300" height="175" fill="url(#wall)"/>
 <rect x="1630" y="822" width="27" height="175" fill="#dddbd9"/>
 <rect x="1649.500" y="822" width="169" height="17.500" fill="#8b7c6c"/>
 <rect x="1649.500" y="836" width="169" height="3.500" fill="#a4978a"/>
 <rect x="1815" y="822" width="7" height="175" fill="#c9c1b9"/>
 <rect x="1821" y="822" width="46" height="175" fill="#e3e3e2"/>
 <rect x="1866" y="822" width="60" height="175" fill="#dcdcdb"/>
 <rect x="1866" y="822" width="60" height="16.500" fill="#8e8474"/>
 <!-- jacket -->
 <path d="M1690 992c0-24 4-44 16-54l12-2 20 6 40-12 22 6c16 6 24 24 30 56z" fill="#271a40"/>
 <path d="M1692 992c0-22 3-42 14-53l10 2-6 51z" fill="#2e1a2c"/>
 <path d="M1756 948l12 8 14-10-8 46h-16z" fill="#17122a"/>
 <!-- neck -->
 <path d="M1754 924h26l2 22-14 10-12-8z" fill="#9c92a2"/>
 <!-- hair back/top -->
 <path d="M1731 905c-2-28 10-46 31-46s33 16 31 46c-1 14-3 24-8 30l-46 2c-5-8-7-18-8-32z" fill="url(#hairT)"/>
 <!-- face -->
 <path d="M1744 898c0-10 8-14 18-14s19 4 19 14c0 16-6 32-18 32s-19-16-19-32z" fill="#bf9686"/>
 <path d="M1746 912c4 10 10 17 17 17s12-6 16-16c-2 2-8 6-16 6s-14-4-17-7z" fill="#b08880" opacity=".8"/>
 <!-- bangs -->
 <path d="M1742 896c0-16 8-26 20-26s20 8 20 24c-6-6-12-8-20-8s-14 4-20 10z" fill="#cfc0a6"/>
 <path d="M1750 900h8M1768 900h8" stroke="#5e4c4c" stroke-width="2.200"/><path d="M1757 918h11" stroke="#94625e" stroke-width="2"/><path d="M1762 902v9" stroke="#a87c70" stroke-width="2" opacity=".7"/>
 <!-- hair front long left -->
 <path d="M1744 884c-12 10-12 36-18 56-6 16-20 30-22 52h52c2-14-2-30-4-44-4-14-10-26-8-64z" fill="url(#hairL)"/>
 <!-- hair right -->
 <path d="M1780 886c10 12 14 32 10 48-1 4-6 6-10 6 2-16 3-36 0-54z" fill="#c6c9d0"/>
 <!-- plants etc -->
 <path d="M1840 986l4-8 4 4 4-12 5 9 4-14 4 11 6-7 2 9 6-5v16z" fill="#55753a" opacity=".72"/>
 <path d="M1846 972l3-8M1860 962l4-6M1868 970l4-8" stroke="#6a8a4a" stroke-width="1.500"/>
 <path d="M1650 986l3-14 3 6 3-24 4 26 4-12 2 18z" fill="#3e5e26"/>
 <rect x="1877.500" y="977.500" width="6" height="8" rx="1" fill="#2c3c9c"/>
 <path d="M1890 986l1.500-11h20.500l1 11z" fill="#595766"/>
 </g>
 <rect x="1646" y="946.700" width="56.700" height="27.800" rx="4.500" fill="#6e6e6e" opacity=".8"/>
 <g fill="#fff"><rect x="1658" y="962.500" width="2.500" height="4.500" opacity=".75"/><rect x="1662.500" y="958.500" width="2.500" height="8.500"/><rect x="1667.500" y="954.500" width="2.500" height="12.500"/></g>
 <g fill="none" stroke="#fff" stroke-width="1.100" stroke-linecap="round"><rect x="1692" y="954.500" width="4.600" height="9.500" rx="2.300" fill="#fff" stroke="none"/><path d="M1689.800 961.500v.4a4.500 4.500 0 0 0 9 0v-.4M1694.300 966.500v2.200"/><path d="M1688 954l13 13.500" stroke="#6e6e6e" stroke-width="2.600"/><path d="M1688.300 954.300l12.500 13"/></g>
</svg></div>
<div class="abs" style="left:0;top:1026px;width:1920px;height:4px;background:#fcfcfc"></div>
<!-- TASKBAR -->
<div id="taskbar">
<svg style="left:0;top:0" width="1920" height="50" viewBox="0 1030 1920 50">
 <defs>
  <linearGradient id="tbg" x1="0" y1="0" x2="1" y2="0"><stop offset="0" stop-color="#1d211c"/><stop offset=".25" stop-color="#20251e"/><stop offset=".55" stop-color="#2b2f23"/><stop offset=".75" stop-color="#2f3125"/><stop offset="1" stop-color="#282b20"/></linearGradient>
  <linearGradient id="cop" x1="0" y1="0" x2="1" y2="1"><stop offset="0" stop-color="#2a8cf0"/><stop offset=".35" stop-color="#38c8d8"/><stop offset=".6" stop-color="#f0c040"/><stop offset=".8" stop-color="#f05a78"/><stop offset="1" stop-color="#a050e0"/></linearGradient>
 </defs>
 <rect x="0" y="1030" width="1920" height="50" fill="url(#tbg)"/>
 <!-- windows logo -->
 <g fill="#fff"><path d="M20 1047.700l8.200-1.100v8H20zM29.200 1046.400l10.800-1.500v9.700h-10.800zM20 1055.600h8.200v8l-8.200-1.100zM29.200 1055.600H40v9.700l-10.800-1.500z"/></g>
 <!-- search box -->
 <rect x="60.500" y="1031" width="359" height="49" fill="#efefef"/>
 <rect x="60.500" y="1031" width="359" height="1" fill="#d5d5d5"/>
 <circle cx="89" cy="1051.500" r="6" fill="none" stroke="#222" stroke-width="1.500"/><path d="M84.500 1056.200l-8.500 8.300" stroke="#222" stroke-width="1.700"/>
 <text x="110.500" y="1062" font-family="Liberation Sans, sans-serif" font-size="19.200" fill="#333">Поиск</text>
 <!-- sparkles -->
 <path d="M360 1041.500c2.200 7 4.800 9.600 11.800 12-7 2.400-9.600 5-11.800 12-2.200-7-4.800-9.600-11.800-12 7-2.400 9.600-5 11.800-12z" fill="#f6c223" stroke="#f6c223" stroke-width="4.500" stroke-linejoin="round"/>
 <path d="M388.500 1052.500c1.200 4 2.700 5.500 6.500 6.700-3.800 1.200-5.300 2.700-6.500 6.700-1.200-4-2.700-5.500-6.500-6.700 3.800-1.200 5.300-2.700 6.500-6.700z" fill="#f4b92a" stroke="#f4b92a" stroke-width="1.600" stroke-linejoin="round"/>
 <path d="M336 1059c.7 3 1.800 4.200 5 5-3.200.8-4.300 2-5 5-.7-3-1.800-4.200-5-5 3.200-.8 4.300-2 5-5z" fill="#1e9ee0" transform="rotate(15 336 1064)"/>
 <circle cx="380.500" cy="1042" r="2.300" fill="#e25a30"/><circle cx="403.500" cy="1066.500" r="2.400" fill="#86b84a"/>
 <!-- task view -->
 <g fill="none" stroke="#fff" stroke-width="1.300"><rect x="440.300" y="1050.500" width="12.200" height="8.500"/><path d="M440.300 1048.800v-2.800h12.200v2.800M440.300 1060.700v2.800h12.200v-2.800M458.300 1044.700v19"/><rect x="456.800" y="1051" width="3" height="3.200" fill="#fff" stroke="none"/></g>
 <!-- copilot -->
 <defs><linearGradient id="cpl" x1="0" y1="0" x2="0" y2="1"><stop offset="0" stop-color="#2a86f0"/><stop offset=".3" stop-color="#3cc8a0"/><stop offset=".55" stop-color="#b8d840"/><stop offset=".78" stop-color="#f8b030"/><stop offset="1" stop-color="#f05a38"/></linearGradient>
 <linearGradient id="cpr" x1="0" y1="0" x2="0" y2="1"><stop offset="0" stop-color="#a860f0"/><stop offset=".5" stop-color="#ee62a8"/><stop offset="1" stop-color="#f8a048"/></linearGradient></defs>
 <rect x="-6.500" y="-12" width="13" height="24" rx="5.500" transform="translate(520.500,1056) skewX(-15)" fill="url(#cpr)"/>
 <rect x="-6.500" y="-12" width="13" height="23" rx="5.500" transform="translate(508.500,1054.300) skewX(-15)" fill="url(#cpl)"/>
 <path d="M513 1043h6c2.500 0 4 1.500 4.500 4l1 4c-1-2-2.500-3-5-3h-2.500c-1.500 0-2.500 1-3 2.500l-3.500 12c-.5 2-2 3.500-4 4 2 0 3.500-1.500 4-3.500z" fill="#1d3fc0" opacity=".85"/>
 <!-- explorer -->
 <g transform="translate(576,1055)"><path d="M-14-11h9l3 3h14a2 2 0 0 1 2 2v3h-28z" fill="#e8a820"/><rect x="-14" y="-6" width="28" height="17" rx="1.500" fill="#fbd05a"/><path d="M-14 3h28v6a2 2 0 0 1-2 2h-24a2 2 0 0 1-2-2z" fill="#f0b82c"/><path d="M-7 11v-8a2 2 0 0 1 2-2h10a2 2 0 0 1 2 2v8h-4v-5h-6v5z" fill="#3a8edc"/></g>
 <!-- chrome -->
 <g transform="translate(637.700,1055)"><circle r="14.500" fill="#e8453c"/><path d="M0 0L-12.600 7.200A14.500 14.500 0 0 0 0 14.500L6.500 3.700z" fill="#2da94f" transform="rotate(0)"/><path d="M-12.600-7.200A14.500 14.500 0 0 0 1 14.400L7 4-6-3.400z" fill="#2da94f"/><path d="M12.600-7.200A14.500 14.500 0 0 1 1 14.450L7.500 3.200 6-7.200z" fill="#fcc934"/><circle r="6.700" fill="#fff"/><circle r="5.300" fill="#4a8af4"/></g>
 <!-- teams (active) -->
 <rect x="670" y="1031" width="61" height="49" fill="#53564b"/>
 <g transform="translate(698.500,1055.800)"><circle cx="-4" cy="-9" r="4.200" fill="#7b83eb"/><circle cx="7" cy="-6.500" r="3" fill="#5b5fc7"/><path d="M-10-3h16v9a8 8 0 0 1-16 0z" fill="#7b83eb"/><path d="M3-2h9a1 1 0 0 1 1 1v6a5 5 0 0 1-10 0z" fill="#5b5fc7"/><rect x="-14" y="-2" width="11" height="11" rx="1.500" fill="#4048b8"/><path d="M-11.500.800h6v1.500h-2.200v5h-1.600v-5h-2.200z" fill="#fff"/><circle cx="10" cy="5.500" r="8.500" fill="#c4121a" stroke="#fff" stroke-width="1.400"/></g>
 <!-- scanner -->
 <g transform="translate(761.700,1055)"><rect x="-15" y="-15" width="30" height="30" fill="#2870e0"/><path d="M-8 2.500h16v6.500h-16z" fill="#fff"/><path d="M-8.500 1L6-7" stroke="#fff" stroke-width="2.200"/><rect x="-5" y="5" width="7" height="1.500" fill="#2870e0"/></g>
 <!-- calculator -->
 <g transform="translate(823.300,1055)"><rect x="-11.500" y="-15" width="23" height="30" rx="1.500" fill="#6a737b"/><rect x="-8.500" y="-12" width="17" height="6" fill="#4ab4e6"/><g fill="#dfe3e6"><rect x="-8.500" y="-3.500" width="4.600" height="4.600"/><rect x="-2.300" y="-3.500" width="4.600" height="4.600"/><rect x="3.900" y="-3.500" width="4.600" height="4.600"/><rect x="-8.500" y="2.200" width="4.600" height="4.600"/><rect x="-2.300" y="2.200" width="4.600" height="4.600"/><rect x="-8.500" y="7.900" width="4.600" height="4.600"/><rect x="-2.300" y="7.900" width="4.600" height="4.600"/></g><rect x="3.900" y="2.200" width="4.600" height="10.300" fill="#1e5fae"/></g>
 <!-- whatsapp -->
 <g transform="translate(885.700,1055)"><path d="M0-14.500a14.300 14.300 0 0 1 0 28.600 14.300 14.300 0 0 1-7-1.800l-7.600 2.500 2.500-7.400A14.300 14.300 0 0 1 0-14.500z" fill="none" stroke="#28c45a" stroke-width="2.800"/><path d="M-6.500-6.500c1-1.500 2.300-1.500 3-.5l1.500 3c.3.800-.2 1.500-1 2.300 1 2.300 2.800 4 5 5 .8-.800 1.500-1.300 2.300-1l3 1.500c1 .700 1 2-.5 3-2 1.500-5.500.8-9-2.300-3.600-3.200-5.800-8-4.300-11z" fill="#28c45a"/></g>
 <!-- word -->
 <g transform="translate(947.700,1055)"><path d="M-13-11l17-3.500v29l-17-3.500z" fill="#2b579a"/><rect x="4" y="-10.500" width="10" height="21" fill="#fff" stroke="#2b579a" stroke-width="1"/><path d="M6-7h6M6-3.500h6M6 0h6M6 3.500h6M6 7h6" stroke="#2b579a" stroke-width="1.300"/><path d="M-10-5l2.200 10 2.300-8.500 2.300 8.500L-1-5" fill="none" stroke="#fff" stroke-width="1.800"/></g>
 <!-- ppt -->
 <g transform="translate(1010,1055)"><path d="M-13-11l17-3.500v29l-17-3.500z" fill="#d04423"/><rect x="4" y="-10.500" width="10" height="21" fill="#fff" stroke="#d04423" stroke-width="1"/><circle cx="8.500" cy="-3" r="3.800" fill="#d04423"/><path d="M6 4h6M6 7.500h6" stroke="#d04423" stroke-width="1.300"/><path d="M-8 6v-11.500h3.500a3.400 3.400 0 0 1 0 6.800h-3.500" fill="none" stroke="#fff" stroke-width="2"/></g>
 <!-- running indicators -->
 <g fill="#76b9ed"><rect x="551" y="1078" width="40" height="2"/><rect x="592" y="1078" width="10" height="2" opacity=".65"/><rect x="670" y="1078" width="61" height="2" fill="#8cc4f0"/><rect x="861" y="1078" width="50.500" height="2"/><rect x="923" y="1078" width="50" height="2"/><rect x="985" y="1078" width="50.500" height="2"/></g>
 <!-- tray -->
 <g fill="none" stroke="#fff" stroke-width="1.300" stroke-linecap="round" stroke-linejoin="round">
  <path d="M1550.500 1058.500l7.500-7.500 7.500 7.500"/>
  <rect x="1582.500" y="1050" width="9.500" height="9.500" rx="1.800"/><path d="M1592.500 1053l3.500-2v7.500l-3.500-2M1583.500 1047a8 8 0 0 1 9 0M1583.500 1062.500a8 8 0 0 0 9 0"/>
  <rect x="1613.500" y="1045" width="8" height="14" rx="3.500" fill="#fff"/><path d="M1610.500 1056a7 7 0 0 0 14 0M1617.500 1063v3.500M1614 1066.500h7"/>
  <rect x="1643.500" y="1051" width="13.500" height="8.500" fill="#fff"/><rect x="1642" y="1049.500" width="16.500" height="11.500"/><path d="M1659.500 1053.500v3.500M1640.500 1048v2M1643.500 1048v2M1639.500 1050.500h5v2a2.500 2.500 0 0 1-5 0zM1642 1055.500v5"/>
  <path d="M1671 1063.500a15 15 0 0 1 15-15M1675.500 1063.500a10.500 10.500 0 0 1 10.500-10.500M1680 1063.500a6 6 0 0 1 6-6" stroke-width="1.200"/><circle cx="1684.500" cy="1063.500" r="1.500" fill="#fff" stroke="none"/>
  <path d="M1699 1052h3.500l4.500-4v14.500l-4.500-4h-3.500zM1710 1052.500a4 4 0 0 1 0 5.500M1713 1050a7.500 7.500 0 0 1 0 10.500"/><path d="M1716 1047.500a11 11 0 0 1 0 15.500" opacity=".45"/>
 </g>
 <text x="1732" y="1061" font-family="Liberation Sans, sans-serif" font-size="14.300" fill="#fff">УКР</text>
 <text x="1793.500" y="1049" font-family="Liberation Sans, sans-serif" font-size="14" fill="#fff">17:38</text>
 <text x="1776" y="1072" font-family="Liberation Sans, sans-serif" font-size="14" fill="#fff">20.03.2026</text>
 <path d="M1869.500 1045.500h19v15h-12.500l-3.500 3.500v-3.500h-3z" fill="#fff"/><path d="M1873 1050h12M1873 1053h12M1873 1056h12" stroke="#282c21" stroke-width="1"/>
 <circle cx="1888" cy="1065" r="9.500" fill="#282c21" stroke="#9a9a9a" stroke-width="1.200"/>
 <text x="1884.500" y="1069.700" font-family="Liberation Sans, sans-serif" font-weight="bold" font-size="13" fill="#fff">2</text>
 <rect x="1914" y="1030" width="1" height="50" fill="#8a8a8a"/>
</svg>
</div>
</body>
</html>
